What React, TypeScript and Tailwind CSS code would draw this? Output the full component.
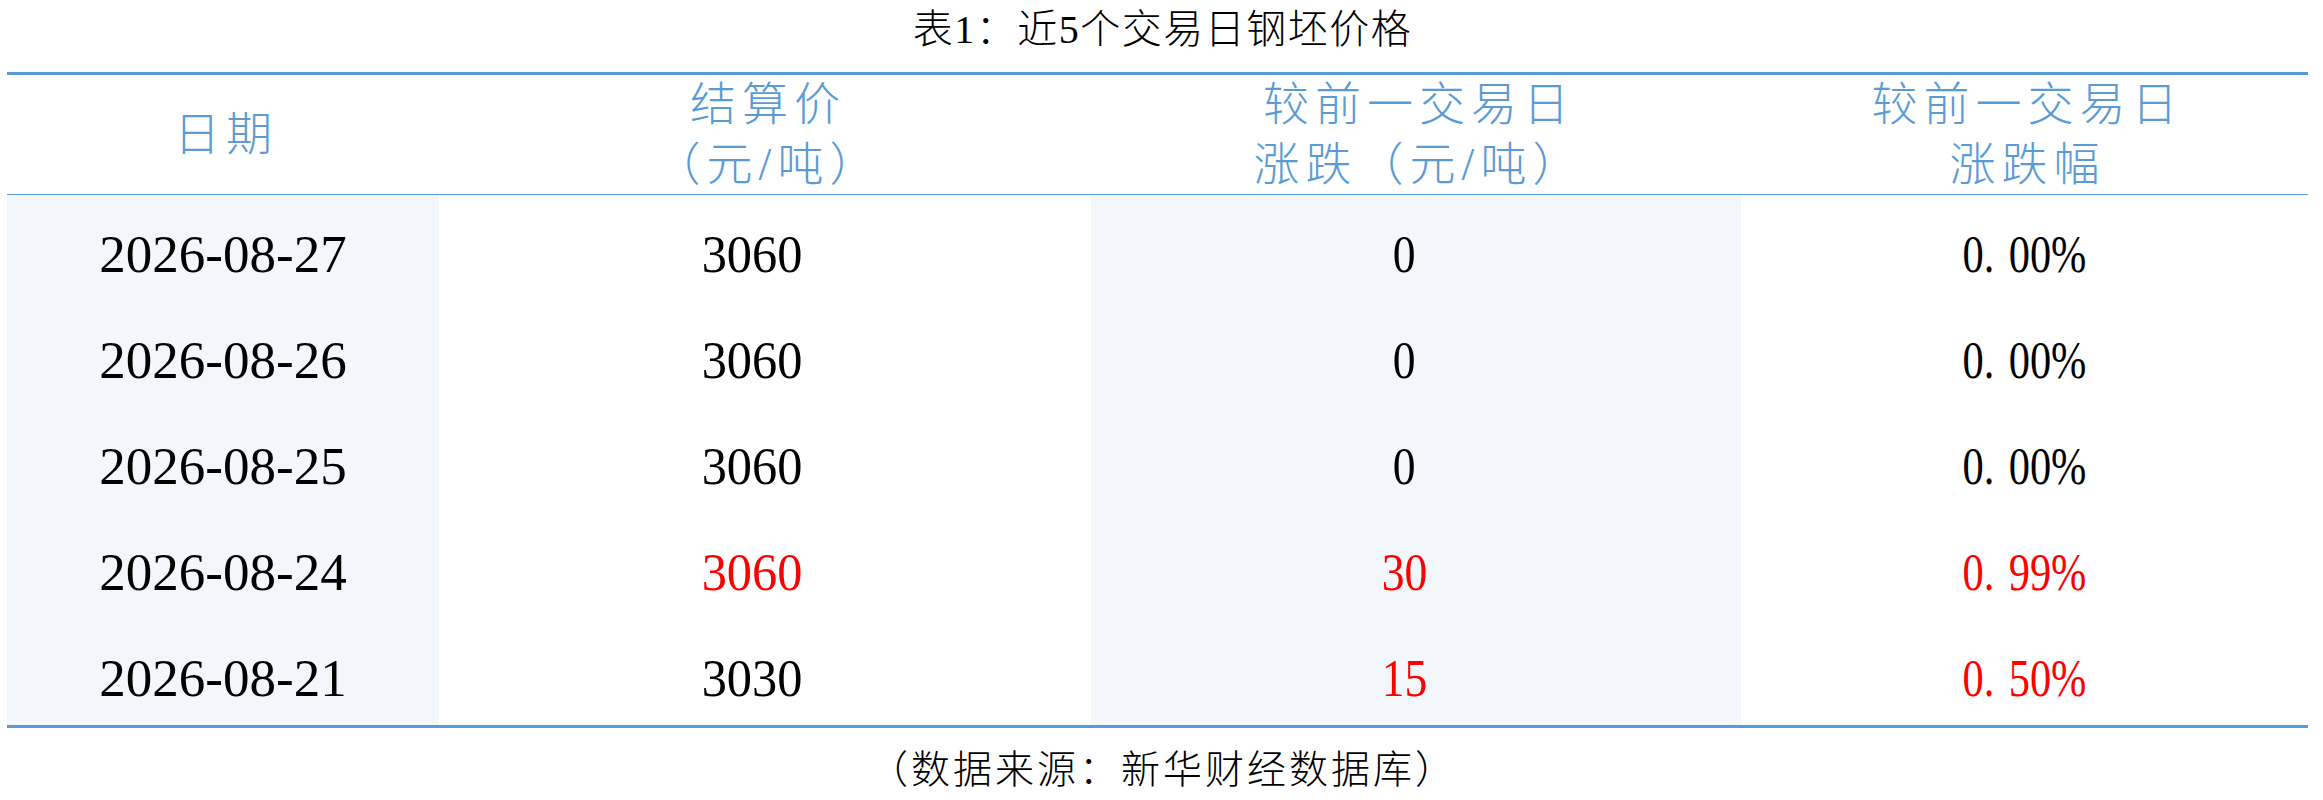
import React from "react";

type Row = {
  date: string;
  price: string;
  change: string;
  pct: string;
  priceRed?: boolean;
  changeRed?: boolean;
  pctRed?: boolean;
};

const rows: Row[] = [
  { date: "2026-08-27", price: "3060", change: "0", pct: "0.00%" },
  { date: "2026-08-26", price: "3060", change: "0", pct: "0.00%" },
  { date: "2026-08-25", price: "3060", change: "0", pct: "0.00%" },
  { date: "2026-08-24", price: "3060", change: "30", pct: "0.99%", priceRed: true, changeRed: true, pctRed: true },
  { date: "2026-08-21", price: "3030", change: "15", pct: "0.50%", changeRed: true, pctRed: true },
];

const cjk = "font-['Liberation_Serif','Noto_Sans_CJK_SC',sans-serif]";
const num = "font-['Liberation_Serif',serif]";

function Pct({ v }: { v: string }) {
  const [a, b] = v.split(".");
  return (
    <span className="inline-block scale-x-[0.8]">
      {a}
      <span className="mr-[18px]">.</span>
      {b}
    </span>
  );
}

export default function App() {
  return (
    <div className="w-[2323px] h-[800px] bg-white text-black">
      <div className={`h-[72px] pb-[12px] pl-[2px] flex items-center justify-center ${cjk} font-light text-[40px] leading-[46px] tracking-[1.5px]`}>
        表1：近5个交易日钢坯价格
      </div>
      <div className="mx-[7px] w-[2301px] border-t-[3px] border-b-[3px] border-[#5b9bd5]">
        <div
          className={`grid grid-cols-[432px_652px_650px_567px] h-[120px] border-b border-[#5b9bd5] text-[#5b9bd5] text-[46px] leading-[60px] tracking-[6px] ${cjk} font-light`}
        >
          <div className="flex items-center justify-center pl-[6px]">日期</div>
          <div className="flex flex-col items-center justify-center text-center pl-[6px]">
            <div>结算价</div>
            <div>（元/吨）</div>
          </div>
          <div className="flex flex-col items-center justify-center text-center pl-[6px]">
            <div>较前一交易日</div>
            <div>涨跌（元/吨）</div>
          </div>
          <div className="flex flex-col items-center justify-center text-center pl-[6px]">
            <div>较前一交易日</div>
            <div>涨跌幅</div>
          </div>
        </div>
        <div className={`grid grid-cols-[432px_652px_650px_567px] ${num} text-[53px] leading-[60px]`}>
          {rows.map((r) => (
            <React.Fragment key={r.date}>
              <div className="h-[106px] pt-[12px] flex items-center justify-center bg-[#f3f6fa]">{r.date}</div>
              <div className={`h-[106px] pt-[12px] pr-[26px] flex items-center justify-center ${r.priceRed ? "text-[#ff0000]" : ""}`}>
                <span className="inline-block scale-x-[0.95]">{r.price}</span>
              </div>
              <div className={`h-[106px] pt-[12px] pr-[24px] flex items-center justify-center bg-[#f3f6fa] ${r.changeRed ? "text-[#ff0000]" : ""}`}>
                <span className="inline-block scale-x-[0.86]">{r.change}</span>
              </div>
              <div className={`h-[106px] pt-[12px] flex items-center justify-center ${r.pctRed ? "text-[#ff0000]" : ""}`}>
                <Pct v={r.pct} />
              </div>
            </React.Fragment>
          ))}
        </div>
      </div>
      <div className={`mt-[17px] pl-[3px] flex justify-center ${cjk} font-light text-[39px] leading-[50px] tracking-[3px]`}>
        （数据来源：新华财经数据库）
      </div>
    </div>
  );
}
